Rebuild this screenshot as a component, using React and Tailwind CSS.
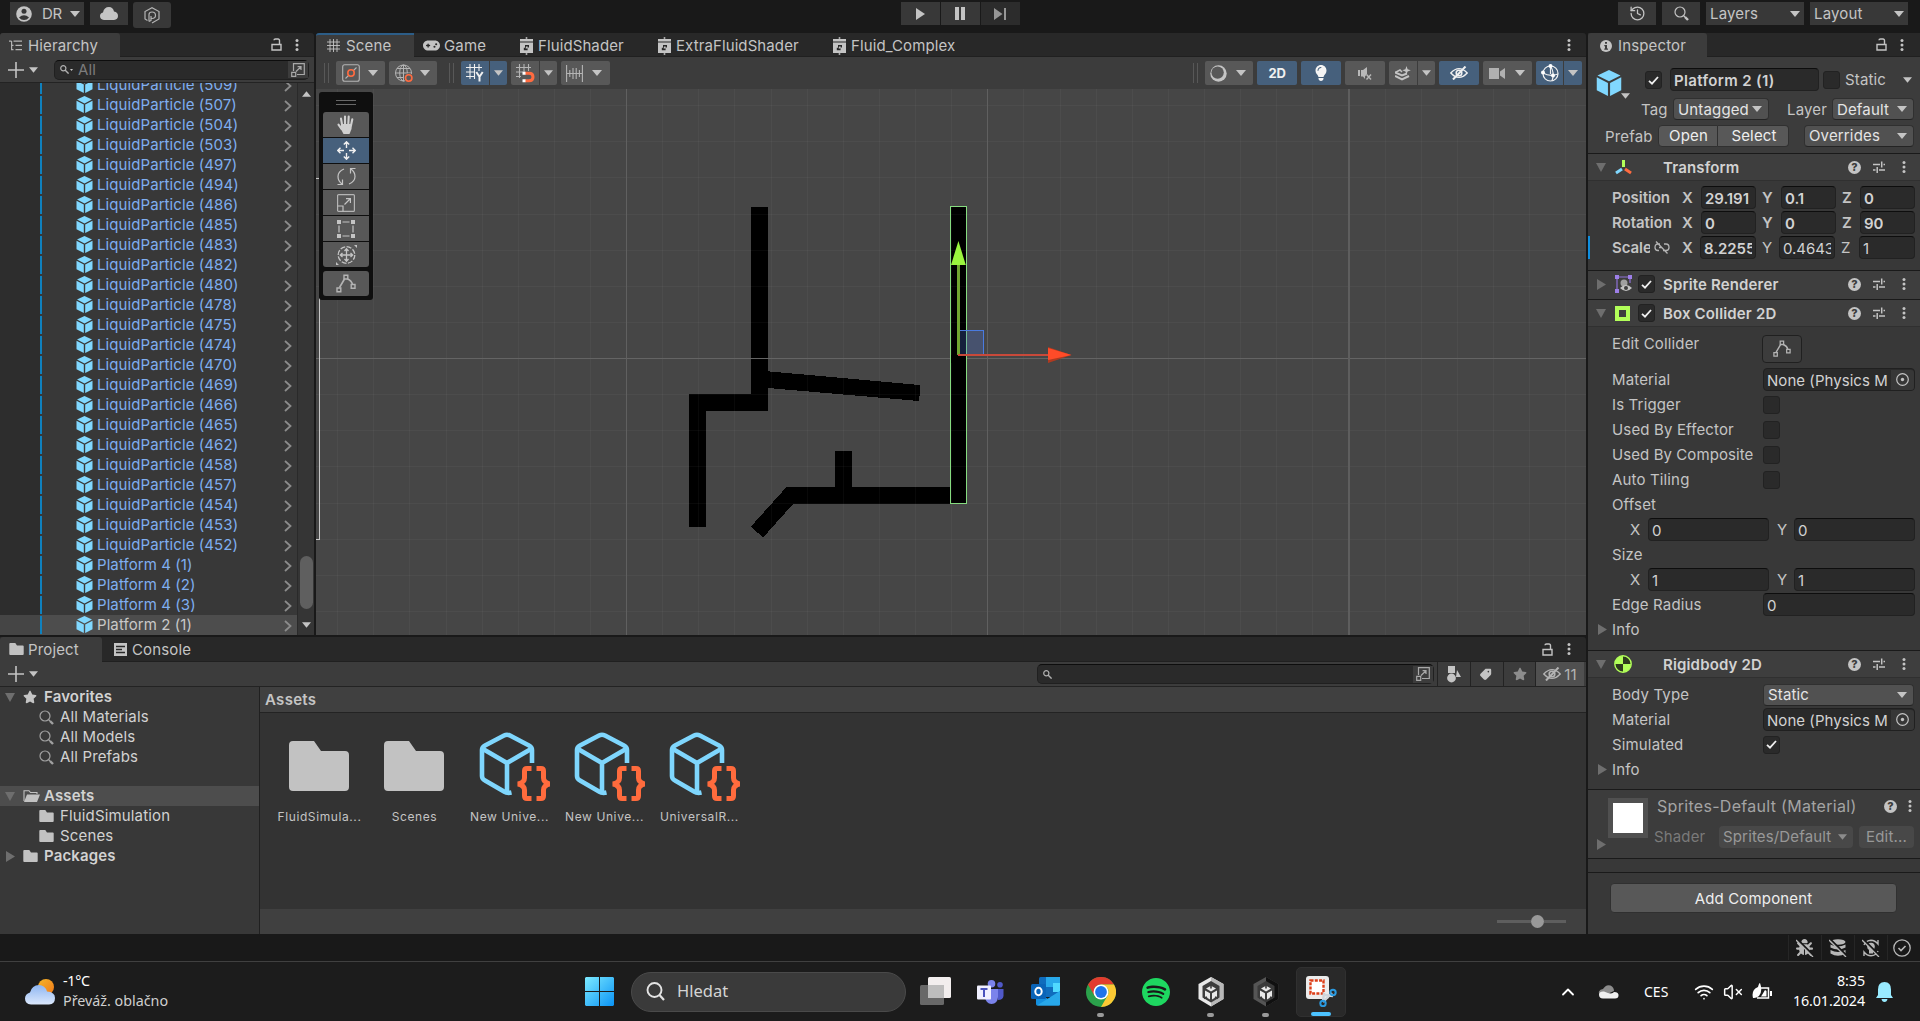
import React from "react";
import { SiSpotify } from "react-icons/si";
import {
  LuHistory, LuWifi, LuChevronUp, LuVolumeX,
} from "react-icons/lu";
import { FaHand, FaGamepad, FaTag, FaStar, FaBug, FaLightbulb } from "react-icons/fa6";

/* ---------- icons ---------- */

const Svg = ({ w, h, vb, className = "", children }) => (
  <svg width={w} height={h} viewBox={vb || `0 0 ${w} ${h}`} className={`shrink-0 ${className}`} fill="none">
    {children}
  </svg>
);

const Tri = ({ c = "#c4c4c4", w = 10, h = 6, className }) => (
  <Svg w={w} h={h} vb="0 0 10 6" className={className}><path d="M0 0H10L5 6Z" fill={c} /></Svg>
);
const TriRight = ({ className }) => (
  <Svg w={9} h={11} className={className}><path d="M0 0L9 5.5L0 11Z" fill="#6e6e6e" /></Svg>
);
const TriFold = ({ className }) => (
  <Svg w={10} h={9} className={className}><path d="M0 0H10L5 9Z" fill="#6e6e6e" /></Svg>
);
const Dots = ({ className }) => (
  <Svg w={4} h={12} className={className}>
    <g fill="#c4c4c4"><circle cx="2" cy="1.6" r="1.5" /><circle cx="2" cy="6" r="1.5" /><circle cx="2" cy="10.4" r="1.5" /></g>
  </Svg>
);
const Lock = ({ className }) => (
  <Svg w={11} h={13} className={className}>
    <path d="M1 6.5h9v5.5H1zM8.5 6.5V2.6Q8.5 1 7 1H4.5Q3 1 3 2.2" stroke="#c4c4c4" strokeWidth="1.4" />
  </Svg>
);
const Cube = ({ s = 17, className }) => (
  <Svg w={s} h={s} vb="0 0 17 17" className={className}>
    <path d="M8.5 0L16 3.6L8.5 7.4L1 3.6Z" fill="#81d8ff" />
    <path d="M.5 4.8L7.8 8.5V17L.5 13.2Z" fill="#81d8ff" />
    <path d="M16.5 4.8L9.2 8.5V17L16.5 13.2Z" fill="#81d8ff" />
  </Svg>
);
const Chevron = () => (
  <Svg w={8} h={12}><path d="M1 1L6.5 6L1 11" stroke="#8c8c8c" strokeWidth="1.8" /></Svg>
);
const Plus = () => (
  <Svg w={16} h={16}><path d="M8 0V16M0 8H16" stroke="#c4c4c4" strokeWidth="1.6" /></Svg>
);
const Magnifier = ({ s = 15, c = "#a0a0a0" }) => (
  <Svg w={s} h={s} vb="0 0 15 15">
    <circle cx="6" cy="6" r="5" stroke={c} strokeWidth="1.2" />
    <path d="M9.5 9.5L11 11" stroke={c} strokeWidth="1.2" /><path d="M11 11L14 14" stroke={c} strokeWidth="2.4" />
  </Svg>
);
const MiniMagnifier = () => (
  <Svg w={9} h={9}><circle cx="3.3" cy="3.3" r="2.6" stroke="#b0b0b0" strokeWidth="1.2" /><path d="M5 5L8.6 8.6" stroke="#b0b0b0" strokeWidth="1.4" /></Svg>
);
const Expand = () => (
  <Svg w={14} h={14}>
    <path d="M2.5 8V.7H13.3V11.5H6M.7 9.3H4.7V13.3H.7ZM5 8.5L10 3.7M6.6 3.7H10V7" stroke="#a8a8a8" strokeWidth="1.2" />
  </Svg>
);
const Folder = ({ w = 15, h = 12, className }) => (
  <Svg w={w} h={h} vb="0 0 60 50" className={className}>
    <path d="M4 0H25L32 10H56Q60 10 60 14V46Q60 50 56 50H4Q0 50 0 46V4Q0 0 4 0Z" fill="#c2c2c2" />
  </Svg>
);
const FolderOpen = () => (
  <Svg w={17} h={12}>
    <path d="M1 11V.7H6L7.5 2.5H14V4" stroke="#c2c2c2" strokeWidth="1.1" /><path d="M4 4.5H17L14 12H1Z" fill="#c2c2c2" />
  </Svg>
);
const Check = () => (
  <Svg w={11} h={9}><path d="M1 4.8L4 7.6L10 1" stroke="#f0f0f0" strokeWidth="1.8" /></Svg>
);
const Help = () => (
  <span className="flex h-[13px] w-[13px] shrink-0 items-center justify-center rounded-full bg-[#c4c4c4] text-[11px] font-extrabold leading-none tracking-normal text-[#3c3c3c]">?</span>
);
const Sliders = ({ className }) => (
  <Svg w={12} h={12} className={className}>
    <path d="M0 3.5H7M10.5 3.5H12M0 9H2.5M6 9H12M8.7.5V6.5M4.2 6V12" stroke="#c4c4c4" strokeWidth="1.5" />
  </Svg>
);
const EditNodes = ({ s = 19, c = "#b4b4b4" }) => (
  <Svg w={s} h={s} vb="0 0 20 20">
    <path d="M3.5 13.5L8.5 5M11.5 5Q15.5 6.5 16.5 10.5" stroke={c} strokeWidth="1.6" />
    <path d="M1 14H4.8V17.8H1ZM8 1.2H11.8V5H8ZM15.2 10.5H19V14.3H15.2Z" stroke={c} strokeWidth="1.4" />
  </Svg>
);
const EyeOff = ({ c = "#f0f0f0", w = 18 }) => (
  <Svg w={w} h={14} vb="0 0 18 14">
    <path d="M.8 7Q9 -1.8 17.2 7Q9 15.8 .8 7Z" stroke={c} strokeWidth="1.4" />
    <circle cx="9" cy="7" r="2.8" stroke={c} strokeWidth="1.6" /><path d="M3 13.5L15.5 .5" stroke={c} strokeWidth="2" />
  </Svg>
);
const GridHash = ({ s = 13, c = "#c4c4c4" }) => (
  <Svg w={s} h={s} vb="0 0 13 13"><path d="M3 0V13M6.5 0V13M10 0V13M0 3H13M0 6.5H13M0 10H13" stroke={c} strokeWidth=".9" /></Svg>
);
const ShaderIcon = () => (
  <Svg w={15} h={18}>
    <path d="M7.5 0V3M7.5 15V18" stroke="#a8a8a8" strokeWidth="1.6" />
    <path d="M1 2H14V4.6H1ZM1 5.6H14V16H1Z" fill="#c4c4c4" />
    <path d="M6 8H10V10.5H8.6V13.2H4.8V10.7H6Z" fill="#282828" /><path d="M7 9.6H8.7V11.4H6.6Z" fill="#c4c4c4" />
  </Svg>
);
const Node = () => (
  <Svg w={18} h={18}>
    <rect x=".7" y=".7" width="16.6" height="16.6" rx="2" stroke="#b4b4b4" strokeWidth="1.1" />
    <path d="M3.5 14.5L6.5 11.5M11.5 6.5L14.5 3.5" stroke="#b4b4b4" strokeWidth="1.1" />
    <circle cx="9" cy="9" r="3.2" stroke="#ff6b40" strokeWidth="1.6" />
  </Svg>
);
const Globe = () => (
  <Svg w={19} h={19}>
    <g stroke="#b4b4b4" strokeWidth="1"><circle cx="8.5" cy="9" r="8" /><ellipse cx="8.5" cy="9" rx="3.8" ry="8" /><path d="M.5 9H16.5M2 4.5H15M2 13.5H10M8.5 1V17" /></g>
    <circle cx="13.7" cy="14" r="4.8" fill="#585858" /><circle cx="13.7" cy="14" r="3.2" stroke="#ff6b40" strokeWidth="1.6" />
  </Svg>
);
const GridY = () => (
  <Svg w={18} h={18}>
    <path d="M4 0V15M8.5 0V15M13 0V7M0 3.5H16M0 8H9M0 12.5H9" stroke="#f0f0f0" strokeWidth="1.1" />
    <path d="M10.3 8L13.5 12.7L16.7 8M13.5 12.5V17.5" stroke="#f0f0f0" strokeWidth="2" />
  </Svg>
);
const GridSnap = () => (
  <Svg w={19} h={19}>
    <path d="M3.5 0V14M8 0V8M12.5 0V7M0 3.5H15M0 8H7M0 12.5H5" stroke="#b4b4b4" strokeWidth="1.1" />
    <path d="M9 9.2H13Q17 9.2 17 13Q17 16.8 13 16.8H9" stroke="#ff6b40" strokeWidth="3" /><path d="M6.5 7.7H9.5V10.7H6.5ZM6.5 15.3H9.5V18.3H6.5Z" fill="#fff" />
  </Svg>
);
const SnapInc = () => (
  <Svg w={17} h={17}><path d="M.6 0V17M3.8 5V12M7 3V14M10.2 3V14M13.4 5V12M16.4 0V17M1 8.5H16" stroke="#b4b4b4" strokeWidth="1.1" /></Svg>
);

/* ---------- building blocks ---------- */

const Checkbox = ({ on, className = "" }) => (
  <span className={`flex h-[18px] w-[17px] shrink-0 items-center justify-center rounded-[3px] border border-[#222] bg-[#2a2a2a] ${className}`}>{on && <Check />}</span>
);
const Field = ({ children, className = "" }) => (
  <span className={`flex h-[23px] shrink-0 items-center whitespace-nowrap rounded-[4px] border border-[#212121] border-t-[#0d0d0d] bg-[#2a2a2a] px-[3px] pt-[2px] text-[#d2d2d2] ${className}`}>
    <span className="overflow-hidden leading-[18px]">{children}</span>
  </span>
);
const Drop = ({ children, className = "" }) => (
  <span className={`flex h-[22px] shrink-0 items-center justify-between whitespace-nowrap rounded-[4px] border border-[#303030] border-b-[#242424] bg-[#515151] pr-[6px] pl-[4px] text-[#e4e4e4] ${className}`}>
    <span>{children}</span><Tri />
  </span>
);
const Tool = ({ children, className = "" }) => (
  <div className={`flex h-6 shrink-0 items-center justify-center bg-[#585858] ${className}`}>{children}</div>
);
const Grip = ({ className = "" }) => (
  <div className={`h-5 w-[5px] shrink-0 border-x border-[#585858] ${className}`} />
);

/* ---------- top bar ---------- */

const TopBar = () => (
  <header className="flex h-[33px] items-start bg-[#191919] pt-[2px] pl-[10px]">
    <button className="flex h-[23px] w-[74px] items-center bg-[#383838] pl-[6px] text-[#c4c4c4]">
      <Svg w={16} h={16}><circle cx="8" cy="8" r="7.8" fill="#c4c4c4" /><circle cx="8" cy="5.3" r="2.5" fill="#383838" /><path d="M3 11.5Q8 7 13 11.5Q11 14 8 14Q5 14 3 11.5Z" fill="#383838" /></Svg>
      <span className="ml-[10px] w-[20px] tracking-[-.3px]">DR</span><Tri className="ml-[8px]" />
    </button>
    <button className="ml-[6px] flex h-[23px] w-[38px] items-center justify-center bg-[#383838]">
      <Svg w={18} h={13}><path d="M4 13Q0 12.5 0 9Q0 6 3 5.5Q4 0 9 0Q13 0 14 4.5Q18 5 18 9Q18 12.5 14 13Z" fill="#c4c4c4" /></Svg>
    </button>
    <button className="ml-[5px] flex h-[26px] w-[38px] items-center justify-center rounded-[3px] bg-[#383838]">
      <Svg w={16} h={17}><path d="M3.5 13.5L1 12V4.5L8 .8L15 4.5V12L8 16" stroke="#b4b4b4" strokeWidth="1.2" /><path d="M5 14.5V7.5Q5 5 8 5Q11.500 5 11.500 8.300Q11.500 11.500 8 11.500Q7 11.500 7 10.500V9M5 14.500L7 13.500V11" stroke="#b4b4b4" strokeWidth="1.2" /></Svg>
    </button>
    <div className="ml-[730px] flex h-[23px] gap-px">
      <button className="flex w-[39px] items-center justify-center bg-[#383838]"><Svg w={9} h={12}><path d="M0 0L9 6L0 12Z" fill="#c4c4c4" /></Svg></button>
      <button className="flex w-[39px] items-center justify-center bg-[#383838]"><Svg w={10} h={13} className="-ml-px"><path d="M0 0H4V13H0ZM6 0H10V13H6Z" fill="#c4c4c4" /></Svg></button>
      <button className="flex w-[39px] items-center justify-center bg-[#2c2c2c]"><Svg w={12} h={12} className="-ml-[2px]"><path d="M0 0L8.5 6L0 12ZM10 0H12V12H10Z" fill="#969696" /></Svg></button>
    </div>
    <div className="ml-[598px] flex h-[23px] gap-[6px] text-[#c4c4c4]">
      <button className="flex w-[38px] items-center justify-center bg-[#383838]"><LuHistory size={17} strokeWidth={1.8} /></button>
      <button className="flex w-[38px] items-center justify-center bg-[#383838]"><Magnifier c="#c4c4c4" /></button>
      <button className="flex w-[98px] items-center justify-between bg-[#383838] pr-[4px] pl-[4px]">Layers<Tri /></button>
      <button className="flex w-[98px] items-center justify-between bg-[#383838] pr-[4px] pl-[4px]">Layout<Tri /></button>
    </div>
  </header>
);

/* ---------- hierarchy ---------- */

const PARTICLES = [509, 507, 504, 503, 497, 494, 486, 485, 483, 482, 480, 478, 475, 474, 470, 469, 466, 465, 462, 458, 457, 454, 453, 452];
const ROWS = [
  ...PARTICLES.map((n) => `LiquidParticle (${n})`),
  "Platform 4 (1)", "Platform 4 (2)", "Platform 4 (3)", "Platform 2 (1)",
];

const Hierarchy = () => (
  <section className="flex h-[602px] w-[314px] flex-col overflow-hidden">
    <div className="flex h-6 shrink-0 items-center rounded-t-[3px] border-b border-[#202020] bg-[#282828]">
      <div className="flex h-6 w-[120px] items-center rounded-t-[3px] bg-[#3c3c3c] pt-[2px] pl-[9px]">
        <Svg w={14} h={11}><path d="M0 1.2H2.5M4.5 1.2H13M2 5.4H4.5M6.5 5.4H13M2 9.7H4.5M6.5 9.7H13M2.6 1V10" stroke="#b4b4b4" strokeWidth="1.2" /></Svg>
        <span className="ml-[5px]">Hierarchy</span>
      </div>
      <Lock className="ml-[151px]" /><Dots className="ml-[13px]" />
    </div>
    <div className="flex h-[26px] shrink-0 items-center border-b border-[#232323] bg-[#3c3c3c] pl-[8px]">
      <Plus /><Tri w={9} className="ml-[5px]" />
      <div className="ml-[16px] flex h-[20px] w-[255px] items-center rounded-[5px] border border-[#202020] border-t-[#0d0d0d] bg-[#2a2a2a] pl-[5px]">
        <MiniMagnifier /><Tri w={3} h={2} className="ml-px" />
        <span className="ml-[5px] text-[#7c7c7c]">All</span>
        <div className="ml-auto flex h-[17px] w-[20px] items-center justify-center bg-[#3c3c3c]"><Expand /></div>
      </div>
    </div>
    <div className="flex h-[552px]">
      <div className="flex h-[552px] w-[297px] flex-col justify-end overflow-hidden">
        {ROWS.map((r, i) => {
          const sel = i === ROWS.length - 1;
          return (
            <div key={r} className={`flex h-5 shrink-0 items-center ${sel ? "bg-[#4d4d4d]" : "bg-[#383838]"}`}>
              <div className={`h-5 w-10 shrink-0 ${sel ? "bg-[#454545]" : "bg-[#2d2d2d]"}`} />
              <div className="h-[18px] w-[2px] shrink-0 bg-[#0f81be]" />
              <Cube className="-mt-px ml-[34px]" />
              <span className={`ml-[4px] pb-[2px] tracking-[.08px] ${sel ? "text-[#c8c8c8]" : "text-[#7faef0]"}`}>{r}</span>
              <span className="mt-px mr-[5px] ml-auto"><Chevron /></span>
            </div>
          );
        })}
      </div>
      <div className="flex w-[17px] flex-col items-center border-l border-[#2a2a2a] bg-[#353535]">
        <Tri className="mt-[8px] rotate-180" w={9} />
        <div className="mt-[459px] h-[53px] w-[13px] rounded-full bg-[#5f5f5f]" />
        <Tri className="mt-[13px]" w={9} />
      </div>
    </div>
  </section>
);

/* ---------- scene ---------- */

const H_LINES = [105, 141, 177, 214, 250, 286, 322, 394, 430, 466, 503, 539, 575, 611];
const V_LINES = Array.from({ length: 36 }, (_, i) => Math.floor(626.6 + (i - 8) * 36.12));

const SceneCanvas = () => (
  <svg width="1270" height="546" viewBox="316 89 1270 546" className="block" shapeRendering="crispEdges">
    <rect x="316" y="89" width="1270" height="546" fill="#464646" />
    <g>
      <path d="M751 207H768V371.3L920 385V391L919 401L768 388V411H706V527H689V394H751Z" fill="#000" />
      <path d="M835 451H852V487H950V504H793L763 537.6L751 526.5L787 486.5L788 487H835Z" fill="#000" />
      <rect x="950" y="206" width="16.5" height="298" fill="#000" />
    </g>
    {H_LINES.map((y) => <rect key={y} x="316" y={y} width="1270" height="1" fill="#fff" opacity=".035" />)}
    {V_LINES.map((x) => <rect key={x} x={x} y="89" width="1" height="546" fill="#fff" opacity=".035" />)}
    <rect x="316" y="358" width="1270" height="1" fill="#646464" />
    <rect x="626" y="89" width="1" height="546" fill="#606060" />
    <rect x="987" y="89" width="1" height="546" fill="#606060" />
    <rect x="1348" y="89" width="2" height="546" fill="#5e5e5e" />
    <path d="M950 207V503M966.5 206V503M950 206.5H967M950 503.5H967" stroke="#86dc80" strokeWidth="1" />
    <rect x="951" y="355" width="15" height="8" fill="#000" />
    <rect x="959" y="330" width="24.5" height="24" fill="#4b73d8" fillOpacity=".28" />
    <path d="M958 330.5H984M983.5 330V354" stroke="#4a7be0" strokeWidth="1.5" />
    <rect x="957" y="264" width="3" height="91" fill="#70a530" />
    <rect x="958" y="354" width="90" height="2" fill="#c8493a" />
    <g shapeRendering="auto">
      <path d="M958.4 241L965.8 265H951Z" fill="#9af53e" />
      <path d="M1048 347L1071.5 355L1048 363Z" fill="#b03a20" /><path d="M1048 348L1071.5 355L1048 360Z" fill="#ff4b28" />
    </g>
    <path d="M319.5 298V539M316 539H320M316 178H319" stroke="#c8c8c8" strokeWidth="1" />
  </svg>
);

const ToolBtn = ({ active, last, children }) => (
  <div className={`flex h-[25px] w-[46px] items-center justify-center ${active ? "bg-[#46607c]" : "bg-[#585858]"} ${last ? "rounded-[3px]" : ""}`}>{children}</div>
);

const ToolPanel = () => (
  <div className="absolute top-[3px] left-[3px] flex h-[208px] w-[54px] flex-col items-center rounded-[3px] bg-[#0f0f0f]">
    <div className="mt-[8px] h-[5px] w-5 border-y border-[#686868]" />
    <div className="mt-[7px] flex flex-col gap-px overflow-hidden rounded-[3px]">
      <ToolBtn>
        <Svg w={19} h={20}>
          <path d="M5.2 10.500L4 3.600M8 9V1.600M11.300 9L11.700 1.600M14 10.500L15.300 4.200M4.500 14L1.500 9.600" stroke="#d0d0d0" strokeWidth="2.100" strokeLinecap="round" />
          <path d="M4.200 9H15L14.500 14L12.500 19H6.500L3 12.500Z" fill="#d0d0d0" />
        </Svg>
      </ToolBtn>
      <ToolBtn active>
        <Svg w={19} h={19}><path d="M9.5 1V7M9.5 12V18M1 9.5H7M12 9.5H18M6.8 3.5L9.5 .8L12.2 3.5M6.8 15.5L9.5 18.2L12.2 15.5M3.5 6.8L.8 9.5L3.5 12.2M15.5 6.8L18.2 9.5L15.5 12.2" stroke="#f0f0f0" strokeWidth="1.4" /></Svg>
      </ToolBtn>
      <ToolBtn>
        <Svg w={19} h={19}><path d="M7 2Q1 4.5 1 9.5Q1 14 5 17M12 17Q18 14.5 18 9.5Q18 5 14 2M.5 17.5H5.5V12.5M18.5 1.5H13.5V6.5" stroke="#c4c4c4" strokeWidth="1.2" /></Svg>
      </ToolBtn>
      <ToolBtn>
        <Svg w={18} h={18}><rect x=".6" y=".6" width="16.8" height="16.8" rx="1" stroke="#b4b4b4" strokeWidth="1.2" /><path d="M.6 12H6V17.4M7.5 10.5L13 5M9 4.6H13.4V9" stroke="#c4c4c4" strokeWidth="1.2" /></Svg>
      </ToolBtn>
      <ToolBtn>
        <Svg w={18} h={18}><path d="M0 0H4V4H0ZM14 0H18V4H14ZM0 14H4V18H0ZM14 14H18V18H14Z" fill="#c4c4c4" /><path d="M5.5 2H12.5M5.5 16H12.5M2 5.5V12.5M16 5.5V12.5" stroke="#c4c4c4" strokeWidth="1.2" /></Svg>
      </ToolBtn>
      <ToolBtn>
        <Svg w={21} h={20}><circle cx="10.5" cy="10" r="8.3" stroke="#c4c4c4" strokeWidth="1.3" strokeDasharray="5 1.5" /><path d="M10.5 4V16M4.5 10H16.5M8.5 6L10.5 3.8L12.5 6M8.5 14L10.5 16.2L12.5 14M6.5 8L4.3 10L6.5 12M14.5 8L16.7 10L14.5 12" stroke="#c4c4c4" strokeWidth="1.3" /><path d="M18 0H21V3ZM0 17V20H3Z" fill="#c4c4c4" /></Svg>
      </ToolBtn>
    </div>
    <div className="mt-1"><ToolBtn last><EditNodes s={20} /></ToolBtn></div>
  </div>
);

const ShaderTab = ({ children, className }) => (
  <div className={`flex shrink-0 items-center pt-[2px] ${className}`}><ShaderIcon /><span className="ml-[4px] tracking-[.1px]">{children}</span></div>
);

const Scene = () => (
  <section className="flex h-[602px] w-[1270px] flex-col">
    <div className="flex h-6 shrink-0 items-center rounded-t-[3px] border-b border-[#202020] bg-[#282828]">
      <div className="flex h-6 w-[98px] shrink-0 items-center rounded-tl-[3px] border-t-2 border-[#2c5d87] bg-[#3c3c3c] pl-[11px]">
        <GridHash /><span className="ml-[6px]">Scene</span>
      </div>
      <div className="ml-[9px] flex w-[96px] shrink-0 items-center pt-[2px]"><FaGamepad size={17} color="#c4c4c4" /><span className="ml-[4px]">Game</span></div>
      <ShaderTab className="w-[138px]">FluidShader</ShaderTab>
      <ShaderTab className="w-[175px]">ExtraFluidShader</ShaderTab>
      <ShaderTab className="w-[200px]">Fluid_Complex</ShaderTab>
      <Dots className="mr-[15px] ml-auto" />
    </div>
    <div className="flex h-8 shrink-0 items-center bg-[#3c3c3c] pl-[8px]">
      <Grip />
      <Tool className="ml-[7px] w-[49px] gap-[8px] rounded-[2px] pr-[2px]"><Node /><Tri /></Tool>
      <Tool className="ml-[4px] w-[48px] gap-[6px] rounded-[2px] pr-[2px]"><Globe /><Tri /></Tool>
      <Grip className="ml-[12px]" />
      <Tool className="ml-[7px] w-[28px] rounded-l-[2px] bg-[#46607c]!"><GridY /></Tool>
      <Tool className="ml-px w-[17px] rounded-r-[2px] bg-[#46607c]!"><Tri w={9} /></Tool>
      <Tool className="ml-[4px] w-[28px] rounded-l-[2px]"><GridSnap /></Tool>
      <Tool className="ml-px w-[17px] rounded-r-[2px]"><Tri w={9} /></Tool>
      <Tool className="ml-[4px] w-[49px] gap-[9px] rounded-[2px] pr-[3px]"><SnapInc /><Tri /></Tool>
      <Grip className="ml-[583px]" />
      <Tool className="ml-[7px] w-[48px] gap-[9px] rounded-[2px] pr-[2px]">
        <Svg w={17} h={17}><circle cx="8.5" cy="8.5" r="8.2" fill="#c4c4c4" /><circle cx="7.6" cy="7.6" r="6.2" fill="#585858" /></Svg><Tri />
      </Tool>
      <Tool className="ml-1 w-10 rounded-[2px] bg-[#46607c]!"><span className="text-[13px] font-bold tracking-tight text-[#f0f0f0]">2D</span></Tool>
      <Tool className="ml-1 w-10 rounded-[2px] bg-[#46607c]!"><FaLightbulb size={16} color="#f4f4f4" /></Tool>
      <Tool className="ml-1 w-10 rounded-[2px]">
        <Svg w={14} h={13}><path d="M0 3H2V9H0ZM3 3L5 3L9 0V7L7 9.5V12L5 9.5H3Z" fill="#b8b8b8" /><path d="M8.5 7.5L13 12.5M13 7.5L8.5 12.5" stroke="#b8b8b8" strokeWidth="1.4" /></Svg>
      </Tool>
      <Tool className="ml-1 w-[28px] rounded-l-[2px]">
        <Svg w={16} h={15}><path d="M0 6.5L7 9.5L12 7.500M0 10L7 13.5L14 10" stroke="#c4c4c4" strokeWidth="2" /><path d="M11.5 0L12.6 3.2L15.8 4.3L12.6 5.4L11.5 8.6L10.4 5.4L7.2 4.3L10.4 3.2Z" fill="#c4c4c4" /><path d="M0 6.5L5 4L7 6" stroke="#c4c4c4" strokeWidth="1.5" /></Svg>
      </Tool>
      <Tool className="ml-px w-[17px] rounded-r-[2px]"><Tri w={9} /></Tool>
      <Tool className="ml-1 w-10 rounded-[2px] bg-[#46607c]!"><EyeOff /></Tool>
      <Tool className="ml-1 w-[49px] gap-[10px] rounded-[2px] pr-[2px]"><Svg w={16} h={11}><path d="M0 0H10V11H0ZM11 3.5L16 0V11L11 7.5Z" fill="#b0b0b0" /></Svg><Tri /></Tool>
      <Tool className="ml-1 w-[27px] rounded-l-[2px] bg-[#46607c]!">
        <Svg w={18} h={18}><g stroke="#f0f0f0" strokeWidth="1.2"><circle cx="9.5" cy="9.5" r="7.5" /><path d="M9.5 2Q14 9 11 17M2 9Q9 13 17 10M9.5 2V10" /></g><g fill="#fff"><circle cx="9.5" cy="2" r="2" /><circle cx="2" cy="8.5" r="2" /><circle cx="12" cy="11.5" r="2" /></g></Svg>
      </Tool>
      <Tool className="ml-px w-[18px] rounded-r-[2px] bg-[#46607c]!"><Tri /></Tool>
    </div>
    <div className="relative h-[546px]"><SceneCanvas /><ToolPanel /></div>
  </section>
);

/* ---------- project ---------- */

const UrpAsset = () => (
  <Svg w={71} h={70}>
    <g stroke="#7fd6fd" strokeWidth="4.6" strokeLinejoin="round">
      <path d="M53 31V18Q53 15 50 13.5L31 3.5Q28 2 25 3.5L6 13.5Q3 15 3 18V44Q3 47 6 48.5L25 59.5Q28 61.5 32.5 60.5" />
      <path d="M4 17L28 31L52 17M28 31V60" />
    </g>
    <g stroke="#ff6b3d" strokeWidth="5">
      <path d="M52.5 36.5H48Q45.500 36.5 45.500 39V46Q45.500 50.500 39 52Q45.500 53.500 45.500 58V64Q45.500 66.500 48 66.500H52.5" />
      <path d="M57.5 36.5H62Q64.500 36.5 64.500 39V46Q64.500 50.500 71 52Q64.500 53.500 64.500 58V64Q64.500 66.500 62 66.500H57.5" />
    </g>
  </Svg>
);

const AssetItem = ({ kind, label }) => (
  <div className="flex w-[95px] flex-col items-center">
    <div className="flex h-[94px] items-start">
      {kind === "folder" ? <Folder w={60} h={50} className="mt-[28px]" /> : <span className="mt-[19px] ml-[11px]"><UrpAsset /></span>}
    </div>
    <span className="ml-[2px] text-[12px] leading-[20px] tracking-[.6px] text-[#c4c4c4]">{label}</span>
  </div>
);

const TreeRow = ({ bold, arrow, icon, indent, label, sel }) => (
  <div className={`flex h-5 items-center ${sel ? "bg-[#4d4d4d]" : ""} ${indent ? "pl-[39px]" : "pl-[5px]"}`}>
    {!indent && <span className="w-[18px]">{arrow === "down" ? <TriFold /> : <TriRight className="ml-px" />}</span>}
    <span className="w-[21px]">{icon}</span>
    <span className={`pb-[2px] ${bold ? "font-semibold" : ""}`}>{label}</span>
  </div>
);

const SideBtn = ({ children, className = "" }) => (
  <div className={`flex h-6 items-center justify-center border-l border-[#232323] ${className}`}>{children}</div>
);

const Project = () => (
  <section className="flex h-[297px] w-[1586px] flex-col">
    <div className="flex h-[25px] shrink-0 items-center rounded-tr-[3px] border-b border-[#202020] bg-[#282828]">
      <div className="flex h-[25px] w-[102px] items-center rounded-t-[3px] bg-[#3c3c3c] pl-[9px]"><Folder /><span className="ml-[4px]">Project</span></div>
      <Svg w={13} h={13} className="ml-[12px]"><path d="M0 0H13V13H0Z" fill="#c4c4c4" /><path d="M2 3.500H11M2 6.500H8M2 9.500H11" stroke="#282828" strokeWidth="1.3" /></Svg>
      <span className="ml-[5px]">Console</span>
      <Lock className="mr-[14px] ml-auto" /><Dots className="mr-[15px]" />
    </div>
    <div className="flex h-[25px] shrink-0 items-center border-b border-[#232323] bg-[#3c3c3c] pl-[8px]">
      <Plus /><Tri w={9} className="ml-[5px]" />
      <div className="ml-[999px] flex h-[20px] w-[397px] items-center justify-between rounded-[5px] border border-[#202020] border-t-[#0d0d0d] bg-[#2a2a2a] pl-[5px]">
        <MiniMagnifier />
        <div className="flex h-[17px] w-[20px] items-center justify-center bg-[#3c3c3c]"><Expand /></div>
      </div>
      <SideBtn className="ml-[3px] w-[33px]"><Svg w={14} h={17}><path d="M1 0H8V7H1ZM10 4L14 11H9Z" fill="#c4c4c4" /><circle cx="4.500" cy="12" r="4.400" fill="#c4c4c4" /></Svg></SideBtn>
      <SideBtn className="w-[33px] pr-[3px]"><FaTag size={13} color="#c4c4c4" className="-scale-x-100" /></SideBtn>
      <SideBtn className="w-[32px]"><FaStar size={14} color="#8c8c8c" /></SideBtn>
      <SideBtn className="w-[49px] gap-[3px] bg-[#505050]"><EyeOff c="#b4b4b4" /><span className="text-[#b4b4b4]">11</span></SideBtn>
    </div>
    <div className="flex h-[247px]">
      <div className="w-[260px] shrink-0 border-r border-[#202020] bg-[#383838] text-[#d2d2d2]">
        <TreeRow bold arrow="down" icon={<FaStar size={14} color="#c4c4c4" />} label="Favorites" />
        <TreeRow indent icon={<Magnifier />} label="All Materials" />
        <TreeRow indent icon={<Magnifier />} label="All Models" />
        <TreeRow indent icon={<Magnifier />} label="All Prefabs" />
        <div className="h-[19px]" />
        <TreeRow bold sel arrow="down" icon={<FolderOpen />} label="Assets" />
        <TreeRow indent icon={<Folder />} label="FluidSimulation" />
        <TreeRow indent icon={<Folder />} label="Scenes" />
        <TreeRow bold arrow="right" icon={<Folder />} label="Packages" />
      </div>
      <div className="flex flex-1 flex-col bg-[#333]">
        <div className="flex h-[26px] items-center border-b border-[#232323] bg-[#404040] pl-[5px] font-semibold tracking-[.3px]">Assets</div>
        <div className="flex flex-1 pl-[11px]">
          <AssetItem kind="folder" label="FluidSimula..." />
          <AssetItem kind="folder" label="Scenes" />
          <AssetItem label="New Unive..." />
          <AssetItem label="New Unive..." />
          <AssetItem label="UniversalR..." />
        </div>
        <div className="flex h-[25px] items-center justify-end bg-[#404040] pr-5">
          <div className="h-[3px] w-[34px] bg-[#5e5e5e]" /><div className="h-[13px] w-[13px] rounded-full bg-[#999]" /><div className="h-[3px] w-[22px] bg-[#5e5e5e]" />
        </div>
      </div>
    </div>
  </section>
);

/* ---------- inspector ---------- */

const CompHeader = ({ title, icon, check, closed, className = "" }) => (
  <div className={`flex items-center border-t border-t-[#1a1a1a] bg-[#3e3e3e] pl-[8px] ${className}`}>
    <span className="w-[19px]">{closed ? <TriRight className="ml-px" /> : <TriFold />}</span>
    <span className="flex w-[23px]">{icon}</span>
    <span className="w-[25px]">{check && <Checkbox on />}</span>
    <span className="font-semibold text-[#d2d2d2]">{title}</span>
    <span className="mr-[14px] ml-auto flex items-center"><Help /><Sliders className="ml-[12px]" /><Dots className="ml-[17px]" /></span>
  </div>
);

const Vec3 = ({ label, x, y, z, scale }) => (
  <div className="flex h-[25px] items-center tracking-[-.05px]">
    <span className={`shrink-0 font-semibold ${scale ? "w-[38px] overflow-hidden" : "w-[70px]"}`}>{label}</span>
    {scale && <Svg w={16} h={13} className="mr-[12px] ml-[4px]"><path d="M6 3H4Q1 3 1 6.500Q1 9.500 4 9.500H5M10 3H12Q15 3 15 6.500Q15 9.500 12 9.500H9M5 6.500H8M2 .5L13.500 12.500" stroke="#b4b4b4" strokeWidth="1.3" /></Svg>}
    <span className={`font-semibold ${scale ? "w-[18px]" : "w-[19px]"}`}>X</span><Field className={`font-semibold ${scale ? "w-[56px]" : "w-[55px]"}`}>{x}</Field>
    <span className={`ml-[6px] ${scale ? "w-[17px]" : "w-[19px] font-semibold"}`}>Y</span><Field className={scale ? "w-[56px]" : "w-[55px] font-semibold"}>{y}</Field>
    <span className={`ml-[6px] ${scale ? "w-[18px]" : "w-[18px] font-semibold"}`}>Z</span><Field className={scale ? "w-[56px]" : "w-[55px] font-semibold"}>{z}</Field>
  </div>
);

const Prop = ({ label, children }) => (
  <div className="flex h-[25px] items-center"><span className="w-[151px] shrink-0 whitespace-nowrap">{label}</span>{children}</div>
);
const Vec2 = ({ x, y }) => (
  <div className="flex h-[25px] items-center pl-[18px]">
    <span className="w-[18px]">X</span><Field className="w-[121px]">{x}</Field>
    <span className="ml-[8px] w-[17px]">Y</span><Field className="w-[121px]">{y}</Field>
  </div>
);
const ObjField = () => (
  <span className="flex h-[23px] w-[152px] shrink-0 items-center rounded-[4px] border border-[#202020] bg-[#2a2a2a] pl-[3px] text-[#d2d2d2]">
    <span className="w-[124px] pt-px whitespace-nowrap tracking-[.05px]">None (Physics M</span>
    <span className="flex h-[20px] w-[23px] items-center justify-center rounded-r-[3px] bg-[#373737]">
      <Svg w={13} h={13}><circle cx="6.500" cy="6.500" r="5.800" stroke="#c4c4c4" strokeWidth="1.200" /><circle cx="6.500" cy="6.500" r="1.700" fill="#c4c4c4" /></Svg>
    </span>
  </span>
);
const InfoRow = () => (
  <div className="-ml-[14px] flex h-[25px] items-center"><TriRight /><span className="ml-[5px]">Info</span></div>
);

const Inspector = () => (
  <section className="flex h-[901px] w-[332px] shrink-0 flex-col bg-[#383838]">
    <div className="flex h-6 shrink-0 items-center border-b border-[#202020] bg-[#282828]">
      <div className="flex h-6 w-[119px] items-center rounded-t-[3px] bg-[#3c3c3c] pt-[2px] pl-[12px]">
        <Svg w={12} h={12}><circle cx="6" cy="6" r="6" fill="#c4c4c4" /><path d="M5 2H7V3.800H5ZM4.300 5H7V8.500H8V9.800H4.300V8.500H5V6.200H4.300Z" fill="#3c3c3c" /></Svg>
        <span className="ml-[6px]">Inspector</span>
      </div>
      <Lock className="ml-[169px]" /><Dots className="ml-[13px]" />
    </div>
    <div className="flex h-24 shrink-0 flex-col bg-[#3c3c3c]">
      <div className="flex h-[37px] pt-[11px]">
        <Cube s={26} className="mt-[2px] ml-[8px]" />
        <Checkbox on className="mt-[3px] ml-[23px]" />
        <Field className="ml-[8px] w-[149px] font-semibold tracking-[.35px]">Platform 2 (1)</Field>
        <Checkbox className="mt-[3px] ml-[4px]" />
        <span className="mt-[2px] ml-[5px] w-[58px] leading-5">Static</span><Tri w={9} className="mt-[9px]" />
      </div>
      <div className="flex h-[28px] items-center pt-[2px]">
        <Tri w={9} className="-mt-[26px] ml-[33px]" />
        <span className="ml-[11px] w-[32px]">Tag</span><Drop className="w-[96px]">Untagged</Drop>
        <span className="ml-[18px] w-[45px]">Layer</span><Drop className="w-[82px]">Default</Drop>
      </div>
      <div className="flex h-[27px] items-center">
        <span className="ml-[17px] w-[53px] pt-px">Prefab</span>
        <span className="flex h-[22px] w-[60px] items-center justify-center rounded-l-[4px] border border-[#303030] bg-[#585858] pl-px text-[#eee]">Open</span>
        <span className="flex h-[22px] w-[71px] items-center justify-center rounded-r-[4px] border border-l-0 border-[#303030] bg-[#585858] pl-[2px] text-[#eee]">Select</span>
        <Drop className="ml-[15px] w-[110px]">Overrides</Drop>
      </div>
    </div>
    <CompHeader className="h-[28px] shrink-0 border-b border-b-[#303030]" title="Transform" icon={
      <Svg w={17} h={17}><path d="M8.500 1V8" stroke="#b2ff59" strokeWidth="3" /><path d="M7 10L1 14" stroke="#81d8ff" strokeWidth="3" /><path d="M10 10L16 14" stroke="#ff6b40" strokeWidth="3" /></Svg>} />
    <div className="flex h-[89px] shrink-0 pt-[4px]">
      <div className="mt-[51px] h-[23px] w-[2px] shrink-0 bg-[#0f8fe0]" />
      <div className="ml-[22px]">
        <Vec3 label="Position" x="29.191" y="0.1" z="0" />
        <Vec3 label="Rotation" x="0" y="0" z="90" />
        <Vec3 label="Scale" x="8.2255" y="0.4643" z="1" scale />
      </div>
    </div>
    <CompHeader className="h-[29px] shrink-0 pb-[2px]" closed check title="Sprite Renderer" icon={
      <Svg w={17} h={18}><path d="M2 2V16M2 2H15M15 2V8" stroke="#8f72d8" strokeWidth="1.200" /><path d="M0 0H4V4H0ZM13 0H17V4H13ZM0 14H4V18H0Z" fill="#9d7fe8" /><circle cx="9" cy="8" r="3.500" fill="#a0a0a0" /><path d="M5 13Q11 7 17 13Q11 19 5 13Z" fill="#c4c4c4" /><circle cx="11" cy="13" r="2" fill="#3e3e3e" /></Svg>} />
    <CompHeader className="h-[28px] shrink-0 border-b border-b-[#303030]" check title="Box Collider 2D" icon={
      <Svg w={16} h={15}><rect x="2" y="2" width="11" height="11" stroke="#b2ff59" strokeWidth="4" /></Svg>} />
    <div className="h-[323px] shrink-0 pt-[4px] pl-6">
      <div className="flex h-[36px]"><span className="mt-[3px] w-[150px] leading-5">Edit Collider</span>
        <span className="mt-[4px] flex h-[28px] w-[40px] items-center justify-center rounded-[4px] border border-[#202020] bg-[#3c3c3c]"><EditNodes s={18} /></span></div>
      <Prop label="Material"><ObjField /></Prop>
      <Prop label="Is Trigger"><Checkbox /></Prop>
      <Prop label="Used By Effector"><Checkbox /></Prop>
      <Prop label={<span className="tracking-[.08px]">Used By Composite</span>}><Checkbox /></Prop>
      <Prop label="Auto Tiling"><Checkbox /></Prop>
      <Prop label="Offset" />
      <Vec2 x="0" y="0" />
      <Prop label="Size" />
      <Vec2 x="1" y="1" />
      <Prop label="Edge Radius"><Field className="w-[152px]">0</Field></Prop>
      <InfoRow />
    </div>
    <CompHeader className="h-[28px] shrink-0 border-b border-b-[#303030]" title="Rigidbody 2D" icon={
      <Svg w={18} h={18} className="-ml-px"><circle cx="9" cy="9" r="8.200" fill="#2e3a1e" stroke="#b2ff59" strokeWidth="1.400" /><path d="M9 9V1A8 8 0 0 0 1 9ZM9 9V17A8 8 0 0 0 17 9Z" fill="#b2ff59" /></Svg>} />
    <div className="h-[111px] shrink-0 pt-[4px] pl-6">
      <Prop label="Body Type"><Drop className="w-[151px]">Static</Drop></Prop>
      <Prop label="Material"><ObjField /></Prop>
      <Prop label="Simulated"><Checkbox on /></Prop>
      <InfoRow />
    </div>
    <div className="flex h-[69px] shrink-0 border-t border-[#1a1a1a] bg-[#3c3c3c]">
      <TriRight className="mt-[49px] ml-[9px]" />
      <div className="mt-[8px] ml-[2px] flex h-10 w-10 shrink-0 items-center justify-center bg-[#505050]"><div className="h-[30px] w-[30px] bg-white" /></div>
      <div className="ml-[6px] flex-1">
        <div className="mt-[6px] flex h-5 items-center"><span className="ml-[3px] w-[227px] shrink-0 text-[16px] whitespace-nowrap tracking-[.3px] text-[#a4a4a4]">Sprites-Default (Material)</span><Help /><Dots className="ml-[11px]" /></div>
        <div className="mt-[9px] flex h-[23px] items-center text-[#7a7a7a]">
          <span className="w-[65px]">Shader</span>
          <span className="flex h-[22px] w-[134px] items-center justify-between rounded-[4px] bg-[#484848] pr-[6px] pl-[4px] text-[#989898]">Sprites/Default<Tri w={9} c="#8c8c8c" /></span>
          <span className="ml-[6px] flex h-[22px] w-[55px] items-center justify-center rounded-[4px] bg-[#484848] text-[#989898]">Edit...</span>
        </div>
      </div>
    </div>
    <div className="h-[14px] shrink-0 border-t border-[#1a1a1a]" />
    <div className="shrink-0 border-t border-[#1a1a1a] pt-[10px] pl-[22px]">
      <div className="flex h-[30px] w-[287px] items-center justify-center rounded-[4px] border border-[#303030] bg-[#585858] text-[#eee]">Add Component</div>
    </div>
  </section>
);

/* ---------- status bar and taskbar ---------- */

const StatusCell = ({ children }) => (
  <div className="flex h-[25px] w-[33px] items-center justify-center border-l border-[#262626]">{children}</div>
);
const StatusBar = () => (
  <div className="flex h-[27px] items-center justify-end bg-[#191919]">
    <StatusCell><Svg w={18} h={18}><foreignObject width="18" height="18"><FaBug size={17} color="#b8b8b8" /></foreignObject><path d="M1 0L18 17" stroke="#191919" strokeWidth="2" /><path d="M0 1L17 18" stroke="#b8b8b8" strokeWidth="1.300" /></Svg></StatusCell>
    <StatusCell><Svg w={18} h={18}><ellipse cx="9" cy="3" rx="7.500" ry="2.800" fill="#b8b8b8" /><path d="M1.500 5.500Q9 9.500 16.500 5.500V8.500Q9 12.500 1.500 8.500ZM1.500 11Q9 15 16.500 11V14.500Q9 19 1.500 14.500Z" fill="#b8b8b8" /><path d="M1 0L18 17" stroke="#191919" strokeWidth="2" /><path d="M0 1L17 18" stroke="#b8b8b8" strokeWidth="1.300" /></Svg></StatusCell>
    <StatusCell><Svg w={18} h={18}><path d="M2 6A7.800 7.800 0 0 1 9 1.200Q13 1.200 16 5V1M16 12A7.800 7.800 0 0 1 9 16.800Q5 16.800 2 13V17" stroke="#b8b8b8" strokeWidth="1.400" /><circle cx="9" cy="7.500" r="3.800" fill="#b8b8b8" /><path d="M7 11H11V14.500H7Z" fill="#b8b8b8" /><path d="M1 0L18 17" stroke="#191919" strokeWidth="2" /><path d="M0 1L17 18" stroke="#b8b8b8" strokeWidth="1.300" /></Svg></StatusCell>
    <StatusCell><Svg w={18} h={18} className="-ml-1"><circle cx="9" cy="9" r="8.200" stroke="#b8b8b8" strokeWidth="1.300" /><path d="M5.500 9L8 11.500L12.500 7" stroke="#b8b8b8" strokeWidth="1.600" /></Svg></StatusCell>
  </div>
);

const UnityHex = ({ a, b, d }) => (
  <Svg w={26} h={30}>
    <path d="M13 0L25.500 7V22L13 29.500L.5 22V7Z" fill={a} /><path d="M13 0L25.500 7V22L13 29.500Z" fill={b} />
    <path d="M13 4L21.500 9V20.500L13 25.500L4.500 20.500V9Z" fill={d} />
    <path d="M13 14.500L8 11.600L13 8.700L18 11.600ZM12 16.200V22.500L7 19.500V13.400ZM14 16.200V22.500L19 19.500V13.400Z" fill="#e8e8e8" />
    <path d="M13 7V11.500M9 20L6 21.500M17 20L20 21.500" stroke={d} strokeWidth="1.600" />
  </Svg>
);

const TaskItem = ({ children, w = "w-[55px]", dot, active }) => (
  <div className={`relative flex h-[50px] items-center justify-center ${w} ${active ? "ml-[3px] rounded-[5px] border border-[#303030] bg-[#292929]" : ""}`}>
    {children}
    {dot && <span className="absolute bottom-0 h-[4px] w-[7px] rounded-full bg-[#9a9a9a]" />}
    {active && <span className="absolute bottom-0 h-[4px] w-5 rounded-full bg-[#4cc2ff]" />}
  </div>
);

const Taskbar = () => (
  <footer className="flex h-[60px] items-center border-t border-[#404040] bg-[#1c1c1c] pl-[25px] font-['Noto_Sans','Open_Sans',sans-serif] text-[14px] tracking-normal text-white">
    <Svg w={30} h={26}>
      <defs>
        <linearGradient id="sun" x1="0" y1="0" x2="1" y2="1"><stop stopColor="#f5b62a" /><stop offset="1" stopColor="#f07818" /></linearGradient>
        <linearGradient id="cloud" x1="0" y1="0" x2="0" y2="1"><stop stopColor="#8fb6f2" /><stop offset="1" stopColor="#dbe8fc" /></linearGradient>
      </defs>
      <circle cx="21" cy="8" r="8" fill="url(#sun)" />
      <path d="M6 25.500Q0 25 0 19.500Q0 15 5 13.500Q7 6 14 6Q20 6 22 12.500Q30 13 30 19Q30 25 24 25.500Z" fill="url(#cloud)" />
    </Svg>
    <div className="mb-[2px] ml-[8px] w-[300px] text-[14.3px] leading-5"><div className="tracking-[-.3px]">-1°C</div><div className="text-[#cfcfcf]">Převáž. oblačno</div></div>
    <Svg w={29} h={29} className="ml-[222px]">
      <defs><linearGradient id="win" gradientUnits="userSpaceOnUse" x1="0" y1="0" x2="29" y2="29"><stop stopColor="#7ceaff" /><stop offset="1" stopColor="#0a93f5" /></linearGradient></defs>
      <path d="M1 0H14V14H0V1ZM15 0H28L29 1V14H15ZM0 15H14V29H1L0 28ZM15 15H29V28L28 29H15Z" fill="url(#win)" />
    </Svg>
    <div className="ml-[17px] flex h-[40px] w-[275px] items-center rounded-full border border-[#4a4a4a] bg-[#3a3a3a] pl-[14px]">
      <Svg w={19} h={19}><circle cx="8.500" cy="8" r="7" stroke="#e4e4e4" strokeWidth="1.900" /><path d="M13.500 13L18 18" stroke="#e4e4e4" strokeWidth="2.200" /></Svg>
      <span className="ml-[12px] text-[16.5px] text-[#d4d4d4]">Hledat</span>
    </div>
    <div className="ml-[2px] flex items-center">
      <TaskItem><Svg w={31} h={29}>
        <rect x="0" y="8" width="24" height="20" rx="1.500" fill="#686868" /><rect x="8" y="0" width="23" height="21" rx="1.500" fill="#f2eeee" /><rect x="8" y="8" width="16" height="13" fill="#bdbdbd" />
      </Svg></TaskItem>
      <TaskItem><Svg w={27} h={24}>
        <circle cx="14.500" cy="3.800" r="3.800" fill="#7b83eb" /><circle cx="23" cy="4.800" r="2.800" fill="#5059c9" />
        <path d="M20 9H26.500V16Q26 20 21 20Z" fill="#5059c9" /><path d="M8 9H21V17Q20.500 24 14.500 24Q9 24 8 17Z" fill="#7b83eb" />
        <rect x="0" y="5.500" width="14" height="14" rx="1" fill="#f0f0ff" /><path d="M3.500 9H10.500M7 9V17" stroke="#4b53bc" strokeWidth="2" />
      </Svg></TaskItem>
      <TaskItem><Svg w={29} h={29}>
        <rect x="8" y="0" width="21" height="20" rx="1.500" fill="#0f6cbd" /><path d="M15 0H29V10H15Z" fill="#28a8ea" /><path d="M22 6H29V15H22Z" fill="#50d9ff" />
        <path d="M5 14L17 22L29 14V27Q29 28.500 27.500 28.500H6.500Q5 28.500 5 27Z" fill="#1490df" /><path d="M29 14L6 28.500H27.500Q29 28.500 29 27Z" fill="#28a8ea" />
        <rect x="0" y="7" width="15" height="15" rx="1.500" fill="#0a64b8" /><ellipse cx="7.500" cy="14.500" rx="3.200" ry="3.700" stroke="#fff" strokeWidth="2" />
      </Svg></TaskItem>
      <TaskItem dot><Svg w={30} h={30}>
        <circle cx="15" cy="15" r="15" fill="#2ba14b" />
        <path d="M2 7.500A15 15 0 0 1 28 7.500H15A7.500 7.500 0 0 0 8.500 11.300L8.500 18.700Z" fill="#e33b2e" />
        <path d="M28 7.500A15 15 0 0 1 15 30L21.500 18.700A7.500 7.500 0 0 0 21.500 11.300L15 7.500Z" fill="#fcc934" />
        <circle cx="15" cy="15" r="7.500" fill="#fff" /><circle cx="15" cy="15" r="5.900" fill="#1f74ea" />
      </Svg></TaskItem>
      <TaskItem><span className="flex h-7 w-7 items-center justify-center rounded-full bg-[#191919]"><SiSpotify size={28} color="#1ed760" /></span></TaskItem>
      <TaskItem dot><UnityHex a="#e8e8e8" b="#b8b8b8" d="#3c3c3c" /></TaskItem>
      <TaskItem dot><UnityHex a="#555" b="#101010" d="#3a3a3a" /></TaskItem>
      <TaskItem active w="w-[50px]"><Svg w={31} h={31}>
        <rect x="0" y="0" width="23" height="23" rx="3" fill="#ececec" /><rect x="4.500" y="4.500" width="13" height="13" fill="#fff" stroke="#dd3e18" strokeWidth="2.400" strokeDasharray="3 1.300" />
        <path d="M17 26L26 17M18 17L17 25M19 19L27 20" stroke="#cfd6dc" strokeWidth="2.400" /><circle cx="27" cy="16.500" r="2.700" stroke="#2a9ae0" strokeWidth="2" /><circle cx="17" cy="27.500" r="2.700" stroke="#2a9ae0" strokeWidth="2" />
      </Svg></TaskItem>
    </div>
    <LuChevronUp size={20} strokeWidth={2.2} className="ml-[212px]" />
    <Svg w={21} h={14} className="ml-[20px]"><path d="M5 11Q0 10 1 6.500Q2 4 5 4Q8 -1 12.500 .5Q16 2 16 6Z" fill="#8c8c8c" /><path d="M5 13.500Q1 13.500 1 9.500Q1.500 6 6 6.500Q14 10 16 7Q21 7 20.500 11Q20 13.500 17 13.500Z" fill="#f0f0f0" /></Svg>
    <span className="ml-[25px] w-[50px] text-[14px]">CES</span>
    <LuWifi size={20} strokeWidth={2} />
    <LuVolumeX size={20} strokeWidth={1.8} className="ml-[9px]" />
    <Svg w={21} h={18} className="ml-[9px]"><path d="M8 5H16.500V15H5" stroke="#fff" strokeWidth="1.500" /><path d="M18 8H20V13H18Z" fill="#fff" /><path d="M1 15Q-1 7 6 4Q7 0 8 0Q11 8 7 13Q4 15.500 1 15ZM10 12L13 7L14.500 8V13.500H9Z" fill="#fff" /></Svg>
    <div className="mb-[2px] ml-[12px] flex w-[80px] flex-col items-end text-[14.3px] leading-5 tracking-[-.1px]"><span>8:35</span><span>16.01.2024</span></div>
    <Svg w={17} h={20} className="ml-[11px]"><path d="M2 13V7.500Q2 0 8.500 0Q15 0 15 7.500V13L17 16H0ZM5.500 17H11.500Q11 20 8.500 20Q6 20 5.500 17Z" fill="#99ebff" /></Svg>
  </footer>
);

export default function App() {
  return (
    <div className="flex h-[1021px] w-[1920px] flex-col overflow-hidden bg-[#191919] font-['Inter',sans-serif] text-[15px] leading-none tracking-[.15px] text-[#c4c4c4]">
      <TopBar />
      <main className="flex h-[901px] justify-between">
        <div className="flex w-[1586px] flex-col justify-between">
          <div className="flex justify-between"><Hierarchy /><Scene /></div>
          <Project />
        </div>
        <Inspector />
      </main>
      <StatusBar />
      <Taskbar />
    </div>
  );
}
